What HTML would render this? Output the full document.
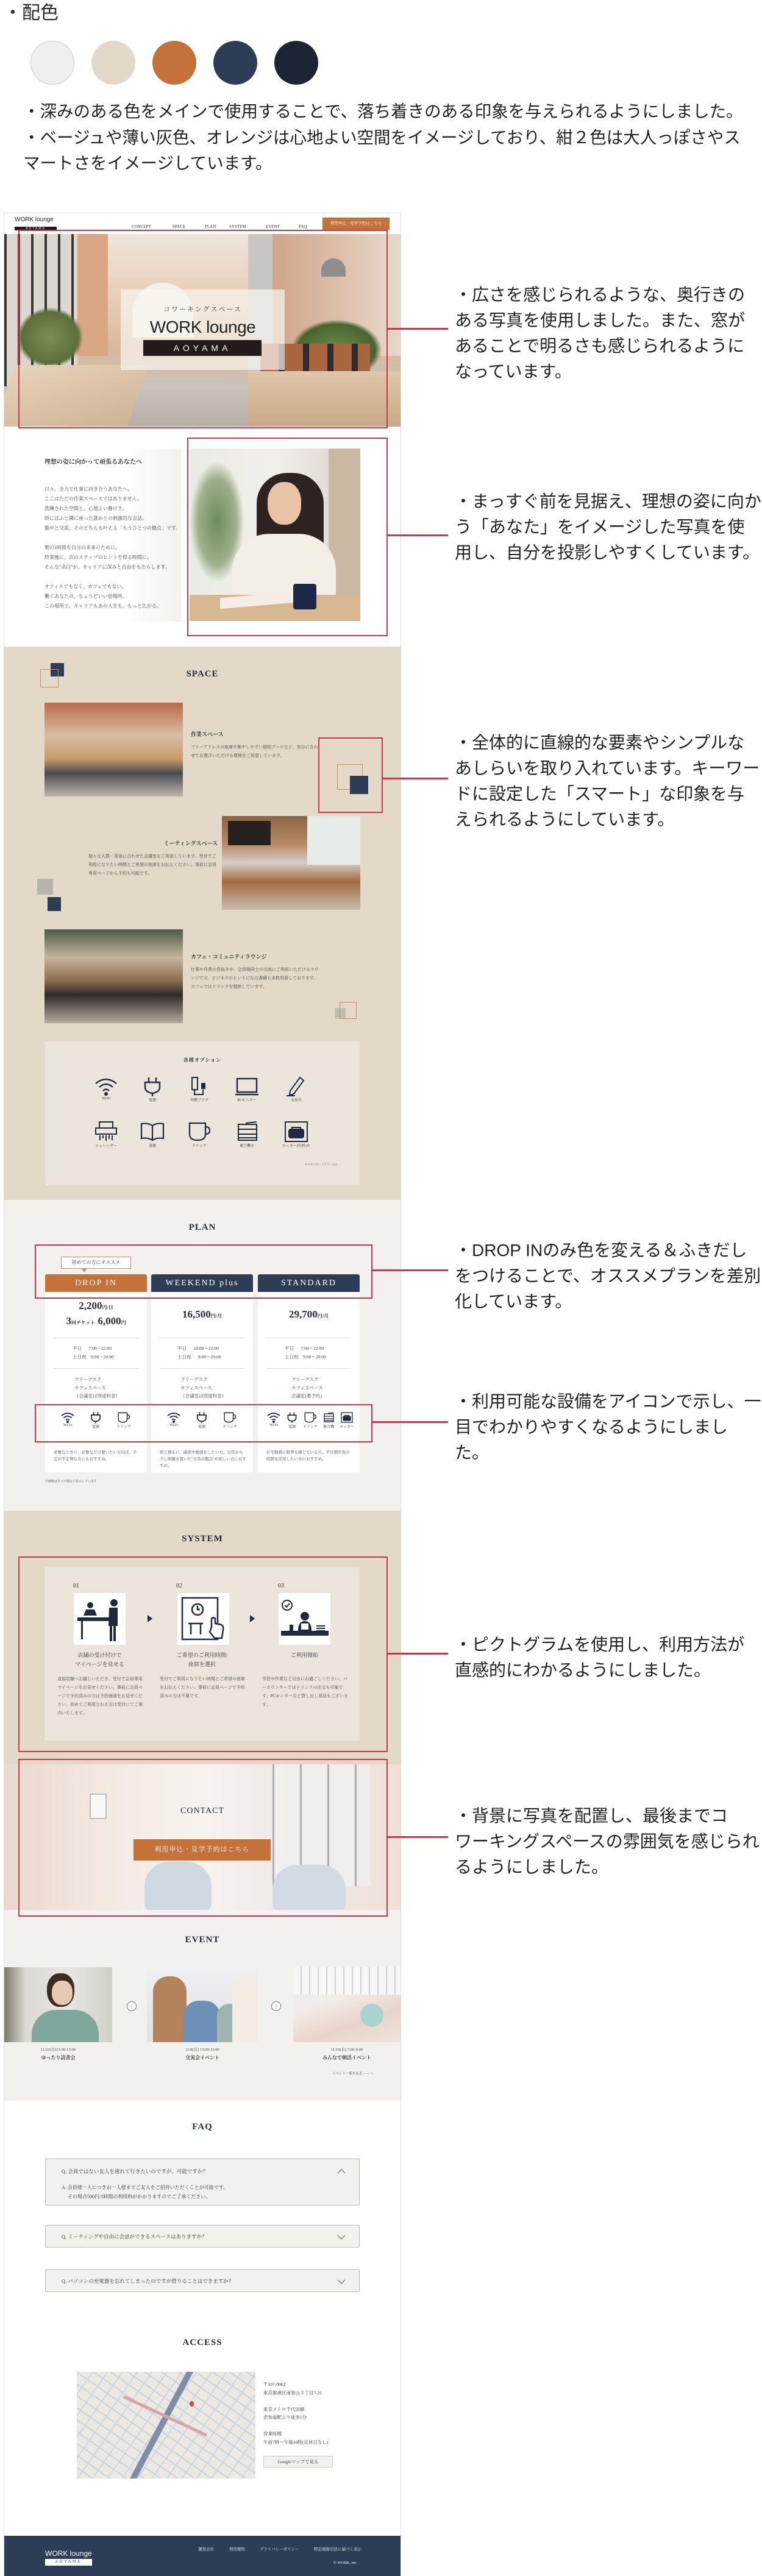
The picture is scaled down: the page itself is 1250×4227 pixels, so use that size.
<!DOCTYPE html>
<html><head><meta charset="utf-8">
<style>
*{margin:0;padding:0;box-sizing:border-box}
body{width:1250px;height:4227px;position:relative;background:#fff;overflow:hidden;font-family:"Liberation Serif","Noto Serif CJK SC",serif;color:#2b2b2b}
.a{position:absolute}
.ann{position:absolute;left:746px;font-family:"Liberation Sans","Noto Sans CJK JP",sans-serif;font-size:28px;line-height:42px;color:#222;white-space:nowrap}
.rb{position:absolute;border:2.5px solid #c8374e}
.cn{position:absolute;height:3px;background:#c8374e}
.sec{position:absolute;left:7px;width:650px}
.h2{position:absolute;left:0;width:650px;text-align:center;font-weight:bold;font-size:15px;letter-spacing:1px;color:#1f2a3c}
.sm{font-size:8px;line-height:16px;color:#444}
.ico{position:absolute;text-align:center;font-size:6px;color:#333}
.ico svg{display:block;margin:0 auto}
.tab{position:absolute;top:2091px;height:29px;color:#fff;text-align:center;line-height:29px;font-size:14px;letter-spacing:2px;border-radius:3px 3px 0 0}
.card{position:absolute;top:2120px;height:296px;background:#fff;width:167px}
.cc{position:absolute;left:0;width:167px;text-align:center}
.hr{position:absolute;left:14px;width:139px;height:1px;background:#ddd}
.faq{position:absolute;left:74px;width:516px;border:1.5px solid #b9b9bf;background:#f3f1ee;border-radius:2px;font-size:8.5px;color:#333}
</style></head><body>

<!-- palette -->
<div class="a" style="left:6px;top:2px;font-family:'Liberation Sans','Noto Sans CJK JP',sans-serif;font-size:30px;line-height:40px">・配色</div>
<div class="a" style="left:50px;top:67px;width:72px;height:72px;border-radius:50%;background:#f1efed;border:1px solid #ccc"></div>
<div class="a" style="left:150px;top:67px;width:72px;height:72px;border-radius:50%;background:#e4d8c9"></div>
<div class="a" style="left:250px;top:67px;width:72px;height:72px;border-radius:50%;background:#c5713a"></div>
<div class="a" style="left:350px;top:67px;width:72px;height:72px;border-radius:50%;background:#2e3d56"></div>
<div class="a" style="left:450px;top:67px;width:72px;height:72px;border-radius:50%;background:#1b2534"></div>
<div class="a" style="left:38px;top:162px;font-family:'Liberation Sans','Noto Sans CJK JP',sans-serif;font-size:27.5px;line-height:42.5px;white-space:nowrap;color:#222">・深みのある色をメインで使用することで、落ち着きのある印象を与えられるようにしました。<br>・ベージュや薄い灰色、オレンジは心地よい空間をイメージしており、紺２色は大人っぽさやス<br>マートさをイメージしています。</div>

<!-- panel -->
<div class="a" style="left:6px;top:349px;width:652px;height:3878px;border:1px solid #ddd;border-bottom:none"></div>

<!-- header -->
<div class="sec" style="top:350px;height:34px;background:#fff">
  <div class="a" style="left:17px;top:5px;font-family:'Liberation Sans',sans-serif;font-size:10px;color:#222">WORK lounge</div>
  <div class="a" style="left:17px;top:22px;width:69px;height:6px;background:#231b1a;color:#fff;font-size:5px;line-height:6px;text-align:center;letter-spacing:2px;font-family:'Liberation Sans',sans-serif">AOYAMA</div>
  <div class="a" style="left:207px;top:8px;font-size:3px;color:#555;width:60px">
  </div>
  <div class="a" style="left:209px;top:18px;font-size:7px;color:#333">CONCEPT</div>
  <div class="a" style="left:276px;top:18px;font-size:7px;color:#333">SPACE</div>
  <div class="a" style="left:329px;top:18px;font-size:7px;color:#333">PLAN</div>
  <div class="a" style="left:369px;top:18px;font-size:7px;color:#333">SYSTEM</div>
  <div class="a" style="left:429px;top:18px;font-size:7px;color:#333">EVENT</div>
  <div class="a" style="left:483px;top:18px;font-size:7px;color:#333">FAQ</div>
  <div class="a" style="left:522px;top:7px;width:110px;height:20px;background:#c5713a;color:#fff;font-size:6.5px;line-height:20px;text-align:center">利用申込・見学予約はこちら</div>
</div>

<!-- hero -->
<div class="sec" style="top:384px;height:316px;overflow:hidden;background:linear-gradient(180deg,#efe6dc 0%,#e6cdb6 35%,#d9b89c 60%,#c9c2bc 80%,#b7aea6 100%)">
  <div class="a" style="left:0;top:0;width:120px;height:250px;background:repeating-linear-gradient(90deg,#3a3634 0 4px,#dcd7d0 4px 22px)"></div>
  <div class="a" style="left:120px;top:0;width:50px;height:200px;background:#d9a784"></div>
  <div class="a" style="left:210px;top:80px;width:100px;height:90px;border-radius:50px 50px 0 0;background:#f4f0ea"></div>
  <div class="a" style="left:400px;top:0;width:40px;height:250px;background:#c9c5c1"></div>
  <div class="a" style="left:440px;top:0;width:210px;height:200px;background:linear-gradient(90deg,#cfa487,#e8d9cc)"></div>
  <div class="a" style="left:20px;top:120px;width:110px;height:100px;border-radius:50%;background:radial-gradient(#7c8f55,#5c6f3b 60%,transparent 70%)"></div>
  <div class="a" style="left:470px;top:140px;width:150px;height:100px;border-radius:50%;background:radial-gradient(#6f8a4a,#4a6431 60%,transparent 70%)"></div>
  <div class="a" style="left:520px;top:40px;width:40px;height:30px;border-radius:20px 20px 0 0;background:#8f8e8c"></div>
  <div class="a" style="left:0;top:215px;width:220px;height:101px;background:linear-gradient(160deg,#e7d4bb,#cdb396);transform:skewX(-20deg)"></div>
  <div class="a" style="left:400px;top:225px;width:250px;height:91px;background:linear-gradient(180deg,#dfc7aa,#c7a887)"></div>
  <div class="a" style="left:420px;top:180px;width:180px;height:45px;background:repeating-linear-gradient(90deg,#a8653e 0 30px,#2d2d30 30px 40px)"></div>
  <div class="a" style="left:191px;top:91px;width:269px;height:132px;background:rgba(248,244,238,0.72)"></div>
  <div class="a" style="left:191px;top:115px;width:269px;text-align:center;font-size:11px;letter-spacing:2px;color:#333">コワーキングスペース</div>
  <div class="a" style="left:191px;top:137px;width:269px;text-align:center;font-family:'Liberation Sans',sans-serif;font-size:28px;color:#222;letter-spacing:-0.5px">WORK lounge</div>
  <div class="a" style="left:228px;top:174px;width:194px;height:26px;background:#231b1a;color:#fff;text-align:center;font-family:'Liberation Sans',sans-serif;font-size:14px;line-height:26px;letter-spacing:6px">AOYAMA</div>
</div>

<!-- concept -->
<div class="sec" style="top:700px;height:361px;background:#fff">
  <div class="a" style="left:60px;top:36px;width:230px;height:284px;background:linear-gradient(90deg,#fff 60%,#f5f1ec)"></div>
  <div class="a" style="left:66px;top:49px;font-size:10px;font-weight:bold;color:#333">理想の姿に向かって頑張るあなたへ</div>
  <div class="a sm" style="left:66px;top:95px;white-space:nowrap">日々、全力で仕事に向き合うあなたへ。<br>ここはただの作業スペースではありません。<br>洗練された空間と、心地よい静けさ。<br>時にはふと隣に座った誰かとの刺激的な会話。<br>集中と交流、そのどちらも叶える「もうひとつの拠点」です。<br><br>朝の1時間を自分の未来のために。<br>終業後に、次のステップのヒントを得る時間に。<br>そんな"余白"が、キャリアに深みと自由をもたらします。<br><br>オフィスでもなく、カフェでもない。<br>働くあなたの、ちょうどいい居場所。<br>この場所で、キャリアもあの人生も、もっと広がる。</div>
  <div class="a" style="left:304px;top:36px;width:280px;height:283px;overflow:hidden;background:linear-gradient(90deg,#e9ece4,#f2efe9 50%,#d9d3cb)">
    <div class="a" style="left:0;top:20px;width:90px;height:200px;border-radius:50%;background:radial-gradient(#6f8a5b,#9fb08d 50%,transparent 70%)"></div>
    <div class="a" style="left:228px;top:0;width:52px;height:283px;background:#c9b8a2"></div>
    <div class="a" style="left:110px;top:40px;width:110px;height:200px;border-radius:50px 50px 20px 20px;background:#2d2320"></div>
    <div class="a" style="left:128px;top:55px;width:55px;height:70px;border-radius:45%;background:#e8c3a8"></div>
    <div class="a" style="left:70px;top:140px;width:170px;height:143px;border-radius:60px 60px 0 0;background:#f4efe6"></div>
    <div class="a" style="left:0;top:240px;width:280px;height:43px;background:#d8b892"></div>
    <div class="a" style="left:170px;top:222px;width:38px;height:42px;border-radius:4px;background:#1d2747"></div>
    <div class="a" style="left:50px;top:240px;width:120px;height:18px;background:#f6ece5;transform:skewY(-5deg)"></div>
  </div>
</div>

<!-- space -->
<div class="sec" style="top:1061px;height:908px;background:#e4d8c8">
  <div class="a" style="left:76px;top:27px;width:22px;height:22px;background:#2e3d56"></div>
  <div class="a" style="left:59px;top:37px;width:30px;height:30px;border:1.5px solid #c98b5d"></div>
  <div class="h2" style="top:37px">SPACE</div>
  <div class="a" style="left:66px;top:92px;width:227px;height:154px;background:linear-gradient(180deg,#b86b4a 0%,#d8bfa5 35%,#c79a6d 60%,#4a4b50 75%,#bfb6ad 100%)"></div>
  <div class="a" style="left:306px;top:137px;font-size:9px;font-weight:bold;color:#333">作業スペース</div>
  <div class="a" style="left:306px;top:158px;font-size:7px;line-height:14px;width:210px;color:#444">フリーアドレスの座席や集中しやすい個別ブースなど、気分に合わせてお選びいただける環境をご用意しています。</div>
  <div class="a" style="left:546px;top:193px;width:42px;height:42px;border:1.5px solid #c98b5d"></div>
  <div class="a" style="left:567px;top:212px;width:30px;height:30px;background:#2e3d56"></div>
  <div class="a" style="left:357px;top:278px;width:227px;height:154px;background:linear-gradient(180deg,#8a6548 0%,#b88a62 30%,#d3cfc9 50%,#a56a3e 70%,#c8bdb2 100%)">
    <div class="a" style="left:10px;top:8px;width:70px;height:40px;background:#24211f"></div>
    <div class="a" style="left:140px;top:0;width:87px;height:80px;background:#e6ece9"></div>
  </div>
  <div class="a" style="left:140px;top:316px;width:210px;text-align:right;font-size:9px;font-weight:bold;color:#333">ミーティングスペース</div>
  <div class="a" style="left:138px;top:337px;width:212px;font-size:7px;line-height:14px;color:#444">様々な人数・用途に合わせた会議室をご用意しています。受付でご利用になりたい時間とご希望の座席をお伝えください。事前に会員専用ページから予約も可能です。</div>
  <div class="a" style="left:54px;top:381px;width:26px;height:26px;background:#b7b3ae"></div>
  <div class="a" style="left:71px;top:411px;width:22px;height:23px;background:#2e3d56"></div>
  <div class="a" style="left:66px;top:464px;width:227px;height:154px;background:linear-gradient(180deg,#4c5a4a 0%,#c7b59d 30%,#8b6a4c 55%,#2c2a28 70%,#b8aca0 100%)"></div>
  <div class="a" style="left:306px;top:502px;font-size:9px;font-weight:bold;color:#333">カフェ・コミュニティラウンジ</div>
  <div class="a" style="left:306px;top:523px;font-size:7px;line-height:14px;width:210px;color:#444">仕事や作業の息抜きや、会員様同士の交流にご利用いただけるラウンジです。ビジネスのヒントになる書籍も多数用意しております。カフェではドリンクを提供しています。</div>
  <div class="a" style="left:542px;top:593px;width:18px;height:18px;background:#c0bcb6"></div>
  <div class="a" style="left:550px;top:583px;width:28px;height:28px;border:1.5px solid #c98b5d"></div>
  <!-- options -->
  <div class="a" style="left:67px;top:648px;width:516px;height:236px;background:#ece5dc;border-radius:2px">
    <div class="a" style="left:0;top:25px;width:516px;text-align:center;font-size:8px;font-weight:bold;letter-spacing:1px">各種オプション</div>
  </div>
</div>
<!-- option icons (page coords) -->
<div class="ico" style="left:150px;top:1766px;width:48px">
<svg width="40" height="34" viewBox="0 0 40 34" fill="none" stroke="#1f2a3c" stroke-width="2.4"><path d="M3 12 Q20 -2 37 12"/><path d="M9 18 Q20 8 31 18"/><path d="M15 24 Q20 19 25 24"/><circle cx="20" cy="29" r="3" fill="#1f2a3c" stroke="none"/></svg>Wi-Fi</div>
<div class="ico" style="left:226px;top:1766px;width:48px">
<svg width="40" height="34" viewBox="0 0 40 34" fill="none" stroke="#1f2a3c" stroke-width="2.4"><path d="M14 2v8M26 2v8"/><path d="M8 10h24v8q0 8-12 10q-12-2-12-10z"/><path d="M20 28v5"/></svg>電源</div>
<div class="ico" style="left:303px;top:1766px;width:48px">
<svg width="40" height="34" viewBox="0 0 40 34" fill="none" stroke="#1f2a3c" stroke-width="2"><rect x="8" y="2" width="9" height="20"/><path d="M12 22v8h14v-8"/><rect x="24" y="12" width="5" height="8" fill="#1f2a3c"/></svg>各種プラグ</div>
<div class="ico" style="left:381px;top:1766px;width:48px">
<svg width="40" height="34" viewBox="0 0 40 34" fill="none" stroke="#1f2a3c" stroke-width="2.4"><rect x="4" y="4" width="32" height="22"/><path d="M1 30h38"/></svg>PCモニター</div>
<div class="ico" style="left:462px;top:1766px;width:48px">
<svg width="40" height="34" viewBox="0 0 40 34" fill="none" stroke="#1f2a3c" stroke-width="2"><path d="M26 2l6 5-16 22-7 2 1-7z"/><path d="M4 32h14"/></svg>文房具</div>
<div class="ico" style="left:150px;top:1839px;width:48px">
<svg width="40" height="36" viewBox="0 0 40 36" fill="none" stroke="#1f2a3c" stroke-width="2"><rect x="9" y="2" width="22" height="10"/><rect x="3" y="12" width="34" height="10"/><path d="M10 24v8M15 24v5M20 24v9M25 24v6M30 24v8"/></svg>シュレッダー</div>
<div class="ico" style="left:226px;top:1839px;width:48px">
<svg width="40" height="36" viewBox="0 0 40 36" fill="none" stroke="#1f2a3c" stroke-width="2.2"><path d="M20 8Q12 3 2 5v24q10-2 18 3q8-5 18-3V5Q28 3 20 8z"/><path d="M20 8v24"/></svg>書籍</div>
<div class="ico" style="left:303px;top:1839px;width:48px">
<svg width="40" height="36" viewBox="0 0 40 36" fill="none" stroke="#1f2a3c" stroke-width="2.2"><path d="M4 4h26v18q0 10-13 10Q4 32 4 22z"/><path d="M30 10q7 0 7 6t-7 6"/></svg>ドリンク</div>
<div class="ico" style="left:381px;top:1839px;width:48px">
<svg width="40" height="36" viewBox="0 0 40 36" fill="none" stroke="#1f2a3c" stroke-width="2"><path d="M18 4l18-2"/><rect x="6" y="6" width="30" height="26"/><path d="M6 14h30M6 22h30M6 28h30"/></svg>複合機※</div>
<div class="ico" style="left:458px;top:1839px;width:56px">
<svg width="40" height="36" viewBox="0 0 40 36" fill="none" stroke="#1f2a3c" stroke-width="2"><rect x="2" y="2" width="36" height="32"/><path d="M13 14v-3h14v3" /><rect x="8" y="14" width="24" height="14" rx="3" fill="#1f2a3c"/></svg>ロッカー(有料)※</div>
<div class="a" style="left:500px;top:1908px;font-size:4.5px;color:#555">※スタンダードプランのみ</div>

<!-- plan -->
<div class="sec" style="top:1969px;height:510px;background:#f3f1ee">
  <div class="h2" style="top:37px">PLAN</div>
</div>
<div class="a" style="left:100px;top:2062px;width:115px;height:20px;border:1.2px solid #d68b5e;background:#fff;font-size:8px;line-height:18px;text-align:center;color:#333">初めての方にオススメ</div>
<div class="a" style="left:134px;top:2082px;width:0;height:0;border-left:4px solid transparent;border-right:4px solid transparent;border-top:6px solid #d68b5e"></div>
<div class="tab" style="left:74px;width:167px;background:#c5713a">DROP IN</div>
<div class="tab" style="left:248px;width:167px;background:#2e3d56">WEEKEND plus</div>
<div class="tab" style="left:423px;width:167px;background:#2e3d56">STANDARD</div>

<div class="card" style="left:74px">
  <div class="cc" style="top:13px;font-size:17px;font-weight:bold;color:#2b2b33">2,200<span style="font-size:8px">円/日</span></div>
  <div class="cc" style="top:38px;font-size:17px;font-weight:bold;color:#2b2b33">3<span style="font-size:8px">回チケット</span> 6,000<span style="font-size:8px">円</span></div>
</div>
<div class="card" style="left:248px">
  <div class="cc" style="top:27px;font-size:17px;font-weight:bold;color:#2b2b33">16,500<span style="font-size:8px">円/月</span></div>
</div>
<div class="card" style="left:423px">
  <div class="cc" style="top:27px;font-size:17px;font-weight:bold;color:#2b2b33">29,700<span style="font-size:8px">円/月</span></div>
</div>
<!-- card inner shared -->
<div class="a" style="left:88px;top:2195px;width:139px;height:1px;background:#ddd"></div>
<div class="a" style="left:262px;top:2195px;width:139px;height:1px;background:#ddd"></div>
<div class="a" style="left:437px;top:2195px;width:139px;height:1px;background:#ddd"></div>
<div class="a" style="left:88px;top:2245px;width:139px;height:1px;background:#ddd"></div>
<div class="a" style="left:262px;top:2245px;width:139px;height:1px;background:#ddd"></div>
<div class="a" style="left:437px;top:2245px;width:139px;height:1px;background:#ddd"></div>
<div class="a" style="left:119px;top:2206px;font-size:7.5px;line-height:14px;color:#444;white-space:pre">平日      7:00〜22:00
土日祝    9:00〜20:00</div>
<div class="a" style="left:291px;top:2206px;font-size:7.5px;line-height:14px;color:#444;white-space:pre">平日      18:00〜22:00
土日祝      9:00〜20:00</div>
<div class="a" style="left:467px;top:2206px;font-size:7.5px;line-height:14px;color:#444;white-space:pre">平日      7:00〜22:00
土日祝    9:00〜20:00</div>
<div class="a" style="left:122px;top:2257px;font-size:7.5px;line-height:13.5px;color:#444">フリーデスク<br>カフェスペース<br>（会議室は別途料金）</div>
<div class="a" style="left:296px;top:2257px;font-size:7.5px;line-height:13.5px;color:#444">フリーデスク<br>カフェスペース<br>（会議室は別途料金）</div>
<div class="a" style="left:478px;top:2257px;font-size:7.5px;line-height:13.5px;color:#444">フリーデスク<br>カフェスペース<br>会議室(要予約)</div>
<!-- small plan icons -->
<div class="a" style="left:88px;top:2316px;width:139px;height:40px">
 <div class="ico" style="left:0;top:0;width:46px"><svg width="24" height="20" viewBox="0 0 40 34" fill="none" stroke="#1f2a3c" stroke-width="3"><path d="M3 12 Q20 -2 37 12"/><path d="M9 18 Q20 8 31 18"/><path d="M15 24 Q20 19 25 24"/><circle cx="20" cy="29" r="3.5" fill="#1f2a3c" stroke="none"/></svg>Wi-Fi</div>
 <div class="ico" style="left:46px;top:0;width:46px"><svg width="24" height="20" viewBox="0 0 40 34" fill="none" stroke="#1f2a3c" stroke-width="3"><path d="M14 2v8M26 2v8"/><path d="M8 10h24v8q0 8-12 10q-12-2-12-10z"/><path d="M20 28v5"/></svg>電源</div>
 <div class="ico" style="left:92px;top:0;width:46px"><svg width="24" height="20" viewBox="0 0 40 36" fill="none" stroke="#1f2a3c" stroke-width="2.6"><path d="M4 4h26v18q0 10-13 10Q4 32 4 22z"/><path d="M30 10q7 0 7 6t-7 6"/></svg>ドリンク</div>
</div>
<div class="a" style="left:262px;top:2316px;width:139px;height:40px">
 <div class="ico" style="left:0;top:0;width:46px"><svg width="24" height="20" viewBox="0 0 40 34" fill="none" stroke="#1f2a3c" stroke-width="3"><path d="M3 12 Q20 -2 37 12"/><path d="M9 18 Q20 8 31 18"/><path d="M15 24 Q20 19 25 24"/><circle cx="20" cy="29" r="3.5" fill="#1f2a3c" stroke="none"/></svg>Wi-Fi</div>
 <div class="ico" style="left:46px;top:0;width:46px"><svg width="24" height="20" viewBox="0 0 40 34" fill="none" stroke="#1f2a3c" stroke-width="3"><path d="M14 2v8M26 2v8"/><path d="M8 10h24v8q0 8-12 10q-12-2-12-10z"/><path d="M20 28v5"/></svg>電源</div>
 <div class="ico" style="left:92px;top:0;width:46px"><svg width="24" height="20" viewBox="0 0 40 36" fill="none" stroke="#1f2a3c" stroke-width="2.6"><path d="M4 4h26v18q0 10-13 10Q4 32 4 22z"/><path d="M30 10q7 0 7 6t-7 6"/></svg>ドリンク</div>
</div>
<div class="a" style="left:434px;top:2316px;width:150px;height:40px">
 <div class="ico" style="left:0;top:0;width:30px"><svg width="24" height="20" viewBox="0 0 40 34" fill="none" stroke="#1f2a3c" stroke-width="3"><path d="M3 12 Q20 -2 37 12"/><path d="M9 18 Q20 8 31 18"/><path d="M15 24 Q20 19 25 24"/><circle cx="20" cy="29" r="3.5" fill="#1f2a3c" stroke="none"/></svg>Wi-Fi</div>
 <div class="ico" style="left:30px;top:0;width:30px"><svg width="22" height="20" viewBox="0 0 40 34" fill="none" stroke="#1f2a3c" stroke-width="3"><path d="M14 2v8M26 2v8"/><path d="M8 10h24v8q0 8-12 10q-12-2-12-10z"/><path d="M20 28v5"/></svg>電源</div>
 <div class="ico" style="left:60px;top:0;width:30px"><svg width="22" height="20" viewBox="0 0 40 36" fill="none" stroke="#1f2a3c" stroke-width="2.6"><path d="M4 4h26v18q0 10-13 10Q4 32 4 22z"/><path d="M30 10q7 0 7 6t-7 6"/></svg>ドリンク</div>
 <div class="ico" style="left:90px;top:0;width:30px"><svg width="20" height="20" viewBox="0 0 40 36" fill="none" stroke="#1f2a3c" stroke-width="2.6"><path d="M18 4l18-2"/><rect x="6" y="6" width="30" height="26"/><path d="M6 14h30M6 22h30M6 28h30"/></svg>複合機</div>
 <div class="ico" style="left:120px;top:0;width:30px"><svg width="20" height="20" viewBox="0 0 40 36" fill="none" stroke="#1f2a3c" stroke-width="2.6"><rect x="2" y="2" width="36" height="32"/><path d="M13 14v-3h14v3"/><rect x="8" y="14" width="24" height="14" rx="3" fill="#1f2a3c"/></svg>ロッカー</div>
</div>
<div class="a" style="left:88px;top:2378px;width:142px;font-size:6.5px;line-height:11px;color:#444">必要なときに、必要なだけ使いたい方向け。予定が不定期な方にもおすすめ。</div>
<div class="a" style="left:262px;top:2378px;width:142px;font-size:6.5px;line-height:11px;color:#444">夜と週末に、副業や勉強をしたい方。日常から少し距離を置いた"日常の拠点"が欲しい方におすすめ。</div>
<div class="a" style="left:437px;top:2378px;width:142px;font-size:6.5px;line-height:11px;color:#444">在宅勤務に限界を感じている方。平日朝や夜の時間を活用したい方におすすめ。</div>
<div class="a" style="left:74px;top:2427px;font-size:5px;color:#444">※価格はすべて税込で表示しています</div>

<!-- system -->
<div class="sec" style="top:2479px;height:416px;background:#e4d8c8">
  <div class="h2" style="top:38px">SYSTEM</div>
  <div class="a" style="left:66px;top:92px;width:517px;height:285px;background:#ece5dc"></div>
</div>
<div class="a" style="left:120px;top:2597px;font-size:10px;color:#333">01</div>
<div class="a" style="left:289px;top:2597px;font-size:10px;color:#333">02</div>
<div class="a" style="left:456px;top:2597px;font-size:10px;color:#333">03</div>
<div class="a" style="left:121px;top:2614px;width:85px;height:85px;background:#fff">
<svg width="85" height="85" viewBox="0 0 85 85" fill="#1f2a3c"><circle cx="27" cy="20" r="5"/><path d="M20 27h14l4 10h-22z"/><circle cx="66" cy="16" r="6"/><path d="M58 24h14v30h-3v25h-4v-25h-2v25h-4v-25h-2z"/><rect x="6" y="40" width="52" height="6"/><rect x="12" y="46" width="3" height="30"/></svg></div>
<div class="a" style="left:291px;top:2614px;width:85px;height:85px;background:#fff">
<svg width="85" height="85" viewBox="0 0 85 85" fill="none" stroke="#1f2a3c" stroke-width="2.5"><rect x="8" y="8" width="58" height="68"/><circle cx="33" cy="27" r="9"/><path d="M33 21v6h4"/><path d="M18 50h24M22 50v18M38 50v18"/><path d="M56 56v-14q3-3 6 0v8l10 2q4 2 3 8l-2 14h-12l-8-10z" fill="#fff"/></svg></div>
<div class="a" style="left:457px;top:2614px;width:85px;height:85px;background:#fff">
<svg width="85" height="85" viewBox="0 0 85 85" fill="#1f2a3c"><circle cx="14" cy="20" r="8" fill="none" stroke="#1f2a3c" stroke-width="2"/><path d="M10 20l3 3 5-6" fill="none" stroke="#1f2a3c" stroke-width="2"/><circle cx="43" cy="38" r="7"/><path d="M32 62q0-16 11-16t11 16z"/><rect x="37" y="50" width="12" height="10" fill="#fff"/><rect x="4" y="62" width="78" height="8"/><rect x="18" y="52" width="6" height="10"/><path d="M62 53h14v2h-14zM62 57h14v2h-14zM62 61h14v1h-14z"/></svg></div>
<div class="a" style="left:242px;top:2650px;width:0;height:0;border-top:6px solid transparent;border-bottom:6px solid transparent;border-left:8px solid #1f2a3c"></div>
<div class="a" style="left:410px;top:2650px;width:0;height:0;border-top:6px solid transparent;border-bottom:6px solid transparent;border-left:8px solid #1f2a3c"></div>
<div class="a" style="left:96px;top:2709px;width:135px;text-align:center;font-size:9px;line-height:15px;color:#333">店舗の受け付けで<br>マイページを見せる</div>
<div class="a" style="left:264px;top:2709px;width:135px;text-align:center;font-size:9px;line-height:15px;color:#333">ご希望のご利用時間/<br>座席を選択</div>
<div class="a" style="left:432px;top:2709px;width:135px;text-align:center;font-size:9px;line-height:15px;color:#333">ご利用開始</div>
<div class="a" style="left:94px;top:2748px;width:144px;font-size:7px;line-height:14px;color:#444">直接店舗へお越しいただき、受付で会員専用マイページをお見せください。事前に会員ページで予約済みの方は予約画面をお見せください。初めてご利用される方は受付にてご案内いたします。</div>
<div class="a" style="left:262px;top:2748px;width:144px;font-size:7px;line-height:14px;color:#444">受付でご利用になりたい時間とご希望の座席をお伝えください。事前に会員ページで予約済みの方は不要です。</div>
<div class="a" style="left:430px;top:2748px;width:144px;font-size:7px;line-height:14px;color:#444">学習や作業など自由にお過ごしください。バーカウンターではドリンクの注文も可能です。PCモニターなど貸し出し用品もございます。</div>

<!-- contact -->
<div class="sec" style="top:2895px;height:239px;overflow:hidden;background:linear-gradient(90deg,#d9b8a4 0%,#ead8cc 25%,#f0e8e2 50%,#e2d6cf 75%,#e3c9b8 100%)">
  <div class="a" style="left:440px;top:0;width:160px;height:200px;background:repeating-linear-gradient(90deg,#6b6e73 0 3px,rgba(230,230,232,0.7) 3px 45px)"></div>
  <div class="a" style="left:140px;top:48px;width:28px;height:42px;background:#f4f2ef;border:2px solid #8a8a8a"></div>
  <div class="a" style="left:230px;top:160px;width:110px;height:80px;border-radius:40px 40px 10px 10px;background:#a9b9cb"></div>
  <div class="a" style="left:440px;top:165px;width:120px;height:75px;border-radius:40px 40px 10px 10px;background:#aebdcd"></div>
  <div class="a" style="left:0;top:0;width:650px;height:239px;background:rgba(255,255,255,0.45)"></div>
  <div class="h2" style="top:69px;font-weight:normal;font-size:14px">CONTACT</div>
  <div class="a" style="left:212px;top:123px;width:225px;height:35px;background:#c5713a;color:#fff;text-align:center;line-height:35px;font-size:11px;letter-spacing:1px">利用申込・見学予約はこちら</div>
</div>

<!-- event -->
<div class="sec" style="top:3134px;height:313px;background:#f3f1ee;overflow:hidden">
  <div class="h2" style="top:41px">EVENT</div>
  <div class="a" style="left:0;top:94px;width:177px;height:123px;background:linear-gradient(90deg,#7d7a6c 0%,#dcd9d2 20%,#e7e6e1 60%,#cfd0c8 100%)">
    <div class="a" style="left:70px;top:10px;width:45px;height:55px;border-radius:45%;background:#3a2b25"></div>
    <div class="a" style="left:78px;top:22px;width:34px;height:40px;border-radius:45%;background:#e9c9b2"></div>
    <div class="a" style="left:45px;top:70px;width:110px;height:53px;border-radius:40px 40px 0 0;background:#7fa79b"></div>
  </div>
  <div class="a" style="left:234px;top:94px;width:182px;height:123px;background:linear-gradient(180deg,#eef0f2,#dfe2e6)">
    <div class="a" style="left:10px;top:15px;width:55px;height:108px;border-radius:25px 25px 0 0;background:#b4835b"></div>
    <div class="a" style="left:60px;top:55px;width:60px;height:68px;border-radius:25px 25px 0 0;background:#6e8fb6"></div>
    <div class="a" style="left:115px;top:60px;width:45px;height:63px;border-radius:20px 20px 0 0;background:#9fb3b0"></div>
    <div class="a" style="left:140px;top:15px;width:42px;height:108px;border-radius:20px 20px 0 0;background:#f2ece5"></div>
  </div>
  <div class="a" style="left:474px;top:94px;width:176px;height:123px;background:linear-gradient(160deg,#e9e9ec 0%,#f2ede9 40%,#e9d4cb 70%,#efe3dc 100%)">
    <div class="a" style="left:0;top:0;width:176px;height:45px;background:repeating-linear-gradient(90deg,#f7f7f8 0 12px,#cfd1d4 12px 14px)"></div>
    <div class="a" style="left:110px;top:60px;width:38px;height:38px;border-radius:50%;background:#a8d3cf"></div>
  </div>
  <div class="a" style="left:201px;top:150px;width:16px;height:16px;border-radius:50%;border:1.3px solid #6a6f80;background:#fff;font-size:9px;line-height:13px;text-align:center;color:#555">‹</div>
  <div class="a" style="left:438px;top:150px;width:16px;height:16px;border-radius:50%;border:1.3px solid #6a6f80;background:#fff;font-size:9px;line-height:13px;text-align:center;color:#555">›</div>
  <div class="a" style="left:0;top:224px;width:177px;text-align:center;font-size:6.5px;color:#444">11/22(日)13:00-15:00</div>
  <div class="a" style="left:0;top:237px;width:177px;text-align:center;font-size:8px;font-weight:bold;color:#333">ゆったり読書会</div>
  <div class="a" style="left:234px;top:224px;width:182px;text-align:center;font-size:6.5px;color:#444">11/8(日) 13:00-15:00</div>
  <div class="a" style="left:234px;top:237px;width:182px;text-align:center;font-size:8px;font-weight:bold;color:#333">交流会イベント</div>
  <div class="a" style="left:474px;top:224px;width:176px;text-align:center;font-size:6.5px;color:#444">11/19(水) 7:00-9:00</div>
  <div class="a" style="left:474px;top:237px;width:176px;text-align:center;font-size:8px;font-weight:bold;color:#333">みんなで朝活イベント</div>
  <div class="a" style="left:538px;top:264px;font-size:5.5px;color:#444">イベント一覧を見る ——↘</div>
</div>

<!-- faq -->
<div class="h2" style="left:7px;top:3482px">FAQ</div>
<div class="faq" style="top:3542px;height:77px">
  <div class="a" style="left:26px;top:14px">Q. 会員ではない友人を連れて行きたいのですが、可能ですか？</div>
  <div class="a" style="left:26px;top:39px;line-height:15px;font-size:8px">A. 会員様一人につきお一人様までご友人をご招待いただくことが可能です。<br>&nbsp;&nbsp;&nbsp;&nbsp;&nbsp;その場合500円/1時間の利用料がかかりますのでご了承ください。</div>
  <svg class="a" style="left:478px;top:16px" width="14" height="8" viewBox="0 0 14 8" fill="none" stroke="#666" stroke-width="1.2"><path d="M1 7L7 1L13 7"/></svg>
</div>
<div class="faq" style="top:3651px;height:37px">
  <div class="a" style="left:26px;top:12px">Q. ミーティングや自由に会話ができるスペースはありますか？</div>
  <svg class="a" style="left:478px;top:15px" width="14" height="8" viewBox="0 0 14 8" fill="none" stroke="#666" stroke-width="1.2"><path d="M1 1L7 7L13 1"/></svg>
</div>
<div class="faq" style="top:3724px;height:37px">
  <div class="a" style="left:26px;top:12px">Q. パソコンの充電器を忘れてしまったのですが借りることはできますか？</div>
  <svg class="a" style="left:478px;top:15px" width="14" height="8" viewBox="0 0 14 8" fill="none" stroke="#666" stroke-width="1.2"><path d="M1 1L7 7L13 1"/></svg>
</div>

<!-- access -->
<div class="h2" style="left:7px;top:3836px">ACCESS</div>
<div class="a" style="left:126px;top:3892px;width:293px;height:175px;overflow:hidden;background:#ece9e2">
  <div class="a" style="left:0;top:0;width:293px;height:175px;background:repeating-linear-gradient(35deg,transparent 0 14px,#c9d3e0 14px 16px),repeating-linear-gradient(-55deg,transparent 0 18px,#cdd6e2 18px 20px)"></div>
  <div class="a" style="left:130px;top:-20px;width:10px;height:230px;background:#7d8ea6;transform:rotate(28deg)"></div>
  <div class="a" style="left:70px;top:70px;width:150px;height:5px;background:#d3a4a8;transform:rotate(25deg)"></div>
  <div class="a" style="left:185px;top:48px;width:7px;height:9px;border-radius:50%;background:#e04040"></div>
</div>
<div class="a" style="left:432px;top:3906px;font-size:7.5px;line-height:13.5px;color:#333">〒107-0062<br>東京都港区南青山３丁目7-21<br><br>東京メトロ千代田線<br>表参道駅より徒歩5分<br><br>営業時間<br>午前7時〜午後10時(定休日なし)</div>
<div class="a" style="left:432px;top:4030px;width:114px;height:19px;border:1.2px solid #ccc;background:#f3f1ee;font-size:7.5px;line-height:17px;text-align:center;color:#333">Googleマップで見る</div>

<!-- footer -->
<div class="sec" style="top:4161px;height:66px;background:#2e3d56">
  <div class="a" style="left:67px;top:22px;font-family:'Liberation Sans',sans-serif;font-size:12px;color:#fff">WORK lounge</div>
  <div class="a" style="left:67px;top:38px;width:77px;height:11px;background:#fff;color:#2e3d56;font-family:'Liberation Sans',sans-serif;font-size:6px;line-height:11px;text-align:center;letter-spacing:3px">AOYAMA</div>
  <div class="a" style="left:318px;top:17px;font-size:6.5px;color:#fff">運営会社</div>
  <div class="a" style="left:369px;top:17px;font-size:6.5px;color:#fff">利用規約</div>
  <div class="a" style="left:419px;top:17px;font-size:6.5px;color:#fff">プライバシーポリシー</div>
  <div class="a" style="left:508px;top:17px;font-size:6.5px;color:#fff">特定商取引法に基づく表示</div>
  <div class="a" style="left:540px;top:41px;font-size:6.5px;color:#fff">© WORK, inc.</div>
</div>

<!-- red boxes -->
<div class="rb" style="left:30px;top:377px;width:606px;height:326px"></div>
<div class="rb" style="left:307px;top:718px;width:329px;height:326px"></div>
<div class="rb" style="left:522px;top:1210px;width:106px;height:124px"></div>
<div class="rb" style="left:57px;top:2042px;width:554px;height:89px"></div>
<div class="rb" style="left:57px;top:2304px;width:554px;height:63px"></div>
<div class="rb" style="left:30px;top:2554px;width:606px;height:321px"></div>
<div class="rb" style="left:30px;top:2886px;width:606px;height:259px"></div>
<div class="cn" style="left:636px;top:538px;width:99px"></div>
<div class="cn" style="left:636px;top:877px;width:99px"></div>
<div class="cn" style="left:628px;top:1276px;width:107px"></div>
<div class="cn" style="left:611px;top:2083px;width:124px"></div>
<div class="cn" style="left:611px;top:2332px;width:124px"></div>
<div class="cn" style="left:636px;top:2712px;width:99px"></div>
<div class="cn" style="left:636px;top:3013px;width:99px"></div>

<!-- annotations -->
<div class="ann" style="top:463px">・広さを感じられるような、奥行きの<br>ある写真を使用しました。また、窓が<br>あることで明るさも感じられるように<br>なっています。</div>
<div class="ann" style="top:802px">・まっすぐ前を見据え、理想の姿に向か<br>う「あなた」をイメージした写真を使<br>用し、自分を投影しやすくしています。</div>
<div class="ann" style="top:1198px">・全体的に直線的な要素やシンプルな<br>あしらいを取り入れています。キーワー<br>ドに設定した「スマート」な印象を与<br>えられるようにしています。</div>
<div class="ann" style="top:2031px">・DROP INのみ色を変える＆ふきだし<br>をつけることで、オススメプランを差別<br>化しています。</div>
<div class="ann" style="top:2279px">・利用可能な設備をアイコンで示し、一<br>目でわかりやすくなるようにしまし<br>た。</div>
<div class="ann" style="top:2678px">・ピクトグラムを使用し、利用方法が<br>直感的にわかるようにしました。</div>
<div class="ann" style="top:2959px">・背景に写真を配置し、最後までコ<br>ワーキングスペースの雰囲気を感じられ<br>るようにしました。</div>
</body></html>
